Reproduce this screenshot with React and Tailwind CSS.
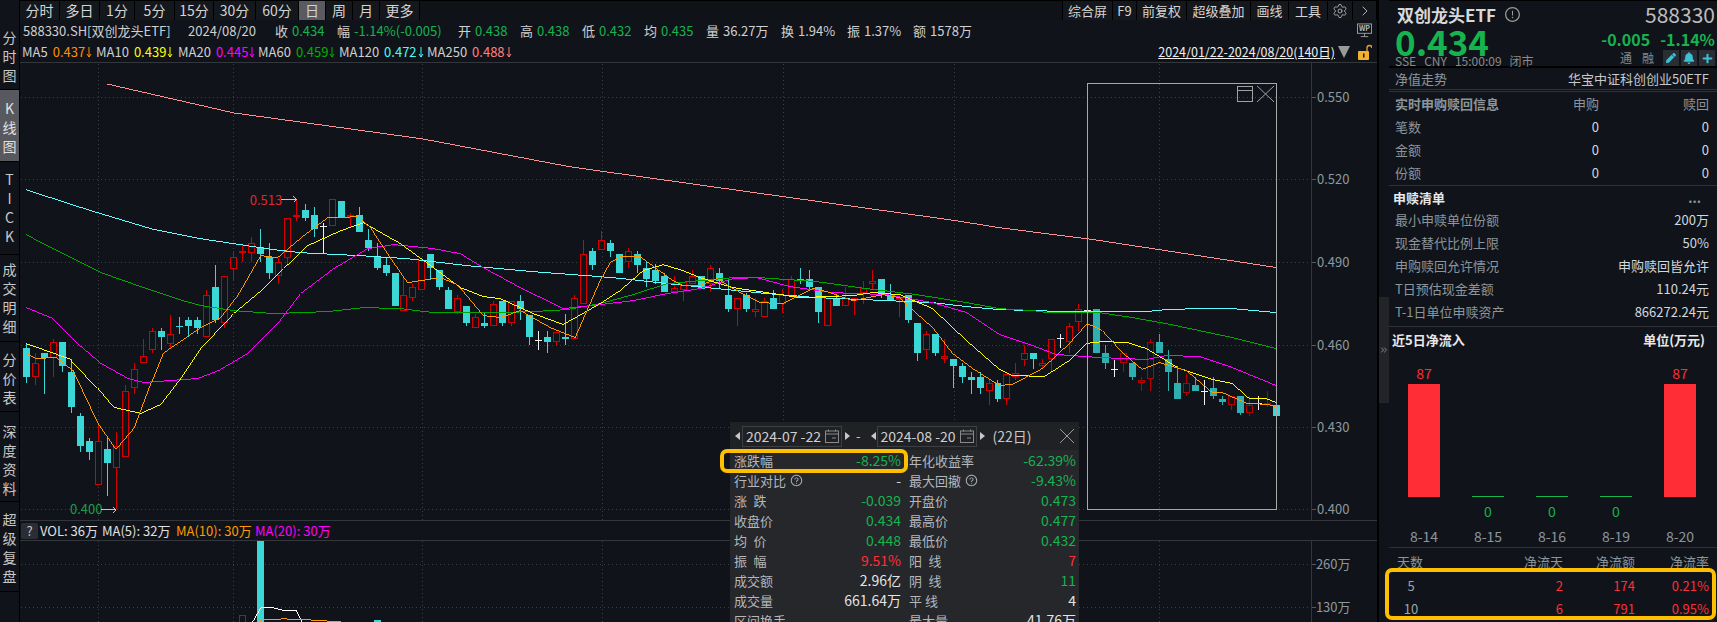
import React from 'react';
import { ChevronRight, ChevronsRight, Settings } from 'lucide-react';
import { FaPen, FaBell, FaPlus } from 'react-icons/fa';
import { AiOutlineExclamationCircle, AiOutlineQuestionCircle } from 'react-icons/ai';

// [type, bodyTop, bodyBottom, wickTop, wickBottom], one per trading day
const candles = [
  ['c',347,377,343,383],['r',363,377,352,385],['c',352,357,352,394],['r',341,357,338,377],['c',341,366,341,372],
  ['c',372,407,358,413],['c',416,446,413,452],['c',441,452,438,460],['r',441,485,423,485],['c',449,463,438,496],
  ['r',446,468,432,509],['r',391,457,385,457],['r',369,388,363,394],['r',355,363,338,363],['r',330,349,327,352],
  ['c',330,336,327,349],['r',333,343,314,347],['c',325,326,316,333],['c',319,325,316,336],['c',319,327,316,333],
  ['r',294,336,289,336],['c',286,319,264,322],['r',275,322,275,327],['r',256,268,250,280],['r',250,252,243,261],
  ['r',242,252,236,261],['c',246,253,228,261],['c',256,272,242,278],['r',261,275,257,283],['r',217,257,217,265],
  ['r',214,216,199,220],['c',209,217,203,220],['c',214,228,206,236],['w',225,225,222,253],['r',198,225,198,225],
  ['c',200,217,200,217],['r',214,216,212,227],['c',214,231,206,231],['c',239,247,228,250],['c',255,267,242,269],
  ['c',264,272,256,275],['c',272,305,272,305],['r',294,310,277,310],['r',286,297,283,300],['r',259,289,258,289],
  ['c',253,267,253,278],['c',269,286,269,289],['c',289,308,286,308],['r',297,311,294,313],['c',305,322,305,325],
  ['r',316,327,313,327],['c',322,325,311,327],['r',303,325,300,325],['c',300,322,300,325],['r',300,322,300,325],
  ['c',300,308,294,319],['c',314,336,314,344],['w',339,339,330,349],['c',336,341,330,352],['r',331,341,331,344],
  ['c',336,338,313,344],['r',297,338,294,338],['r',253,303,239,303],['c',250,264,247,269],['r',239,249,230,249],
  ['c',242,250,239,256],['c',253,272,253,272],['r',250,261,247,267],['c',253,264,250,272],['c',267,278,261,286],
  ['c',269,280,263,283],['c',275,291,272,291],['r',287,291,275,291],['r',281,289,281,300],['r',275,283,269,283],
  ['c',275,288,275,288],['r',267,283,264,291],['c',272,280,267,288],['c',294,308,278,311],['r',297,308,297,325],
  ['c',294,308,292,311],['r',308,311,297,316],['r',300,316,297,316],['c',297,308,289,308],['r',294,303,288,312],
  ['r',278,295,275,295],['c',278,280,267,283],['c',278,286,269,288],['c',286,311,286,322],['r',297,325,297,325],
  ['c',297,305,294,305],['r',297,305,286,305],['r',297,300,297,314],['r',287,292,280,303],['r',280,283,269,288],
  ['c',278,294,278,297],['c',294,300,283,300],['r',297,299,297,316],['c',294,319,294,322],['c',322,352,322,360],
  ['r',333,349,330,358],['c',333,352,333,355],['r',355,358,338,363],['c',358,366,358,388],['c',366,377,363,383],
  ['c',377,380,372,394],['c',377,388,372,394],['r',383,391,380,405],['c',383,399,380,402],['r',374,399,374,405],
  ['r',373,377,363,380],['r',352,359,344,366],['c',352,358,352,369],['r',363,366,358,369],['r',338,358,338,371],
  ['w',337,337,333,347],['r',325,341,322,352],['r',308,321,303,330],['w',309,309,306,312],['c',308,352,308,352],
  ['c',352,363,344,369],['w',369,369,359,377],['r',352,363,352,372],['c',363,377,363,380],['r',380,383,377,391],
  ['r',341,379,338,391],['c',341,352,333,352],['c',358,372,349,391],['c',383,399,366,399],['r',383,393,374,396],
  ['c',385,391,377,391],['w',391,391,380,405],['c',388,396,377,399],['c',399,402,396,405],['r',396,405,396,410],
  ['c',396,413,396,415],['r',405,413,396,416],['w',403,403,396,410],['r',403,405,391,407],['c',405,416,405,416],
];

const ma250 = '106,83 233,112 422,138 570,166 770,194 957,220 1000,227 1095,239 1278,267';
const ma120 = '25,189 87,209 150,228 200,238 233,243 273,249 300,252 360,255 407,258 467,265 533,271 600,276 623,278 667,283 717,288 767,293 817,297 887,300 933,302 967,306 1000,309 1067,311 1100,311 1147,311 1167,309 1200,308 1233,308 1277,312';
const ma60 = '25,234 60,252 100,272 140,286 182,300 200,305 233,310 273,313 327,311 363,307 400,308 433,312 500,312 533,311 567,309 600,303 633,294 667,283 700,280 733,277 760,277 817,281 867,288 917,294 967,302 1000,308 1033,310 1048,312 1100,312 1133,317 1167,323 1200,330 1233,337 1277,348';
const ma20 = '25,307 52,318 73,340 100,363 127,378 143,382 197,378 218,370 247,353 277,323 300,293 333,268 367,248 393,244 433,248 460,253 483,267 520,287 563,308 600,304 633,300 667,293 700,288 733,278 757,277 790,286 833,292 887,294 933,302 967,312 1000,334 1033,345 1057,354 1100,357 1147,359 1167,355 1200,356 1233,367 1277,385';
const ma10 = '25,343 70,359 97,388 113,407 140,413 160,404 180,378 200,348 233,313 263,288 283,268 307,245 340,230 363,222 400,243 433,267 460,287 483,296 500,298 533,313 563,324 600,303 620,290 643,270 663,264 683,270 700,277 733,287 767,292 800,297 853,295 873,292 900,294 933,308 953,327 967,340 1000,369 1013,375 1045,376 1070,360 1087,343 1103,341 1128,342 1147,348 1180,368 1213,379 1233,383 1250,398 1267,398 1277,402';
const ma5 = '25,353 35,358 55,357 72,370 97,423 115,449 133,428 150,383 162,353 200,327 220,317 237,295 260,255 277,257 303,235 327,217 357,216 370,227 387,253 407,282 440,277 457,284 483,315 500,317 520,310 550,327 575,337 600,280 610,262 620,256 640,256 673,280 683,285 700,285 717,278 733,288 760,302 783,303 813,288 827,291 853,300 883,294 900,297 917,313 933,327 953,353 973,368 1000,385 1013,384 1043,368 1070,343 1088,323 1103,330 1123,352 1143,369 1160,362 1187,370 1213,392 1223,392 1248,403 1270,404 1277,407';

const maRow = [
  { name: 'MA5', value: '0.437', color: 'text-[#ff9000]', w: 'w-[74px]' },
  { name: 'MA10', value: '0.439', color: 'text-[#ffff00]', w: 'w-[82px]' },
  { name: 'MA20', value: '0.445', color: 'text-[#ff00ff]', w: 'w-[80px]' },
  { name: 'MA60', value: '0.459', color: 'text-[#00b000]', w: 'w-[81px]' },
  { name: 'MA120', value: '0.472', color: 'text-[#40ffff]', w: 'w-[88px]' },
  { name: 'MA250', value: '0.488', color: 'text-[#ff8080]', w: 'w-[88px]' },
];

const GridX = [97, 232, 422, 602, 783, 954, 1160];

const Candle = ({ c, i }) => {
  const [t, bt, bb, wt, wb] = c;
  const x = 25 + i * 9.007;
  const cx = Math.round(x) + 0.5;
  const dim = i >= 118 && i < 139;
  const cyan = dim ? '#2fb0b0' : '#3bd6d6';
  const red = dim ? '#b80000' : '#d60000';
  if (t === 'w') {
    return (
      <g stroke="#f0f0f0">
        <line x1={cx} x2={cx} y1={wt} y2={wb} />
        <line x1={cx - 3.5} x2={cx + 3.5} y1={bt + 0.5} y2={bt + 0.5} />
      </g>
    );
  }
  if (t === 'c') {
    return (
      <g>
        <line x1={cx} x2={cx} y1={wt} y2={wb} stroke={cyan} />
        <rect x={cx - 3.5} y={bt} width={7} height={Math.max(bb - bt, 1)} fill={cyan} />
      </g>
    );
  }
  return (
    <g stroke={red} fill="none">
      <line x1={cx} x2={cx} y1={wt} y2={bt} />
      <line x1={cx} x2={cx} y1={bb} y2={wb} />
      <rect x={cx - 3} y={bt + 0.5} width={6} height={Math.max(bb - bt - 1, 1)} fill="#10141a" />
    </g>
  );
};

const Arrow = ({ x1, x2, y }) => (
  <g stroke="#c8c8c8" fill="none">
    <line x1={x1} x2={x2} y1={y} y2={y} />
    <polyline points={`${x2 - 3},${y - 3} ${x2},${y} ${x2 - 3},${y + 3}`} />
  </g>
);

const MainChart = () => (
  <svg viewBox="20 62 1357 458" className="block w-[1357px] h-[458px]" shapeRendering="crispEdges">
    {[96.5, 178.5, 261.5, 344.5, 427.5, 509.5].map((y, i) => (
      <g key={y}>
        <line x1={20} x2={1312} y1={y} y2={y} stroke="#3c4046" strokeDasharray="1 3" />
        <line x1={1312} x2={1317} y1={y} y2={y} stroke="#55595e" />
        <text x={1318} y={y + 4.5} fontSize="13" fill="#8f989e" shapeRendering="auto">
          {['0.550', '0.520', '0.490', '0.460', '0.430', '0.400'][i]}
        </text>
      </g>
    ))}
    {GridX.map((x) => (
      <line key={x} x1={x + 0.5} x2={x + 0.5} y1={63} y2={520} stroke="#3c4046" strokeDasharray="1 3" />
    ))}
    <line x1={1312.5} x2={1312.5} y1={62} y2={520} stroke="#33363b" />

    {candles.map((c, i) => <Candle key={i} c={c} i={i} />)}

    <polyline points={ma250} fill="none" stroke="#ff8f8f" />
    <polyline points={ma120} fill="none" stroke="#60ffff" />
    <polyline points={ma60} fill="none" stroke="#00a800" />
    <polyline points={ma20} fill="none" stroke="#ff00ff" />
    <polyline points={ma10} fill="none" stroke="#ffff00" />
    <polyline points={ma5} fill="none" stroke="#ff9a00" />

    {/* range selection */}
    <rect x={1088.5} y={82.5} width={189} height={427} fill="none" stroke="#a8a8a8" />
    <rect x={1238.5} y={85.5} width={15} height={15} fill="none" stroke="#a0a0a0" />
    <line x1={1238} x2={1254} y1={89.5} y2={89.5} stroke="#a0a0a0" />
    <g stroke="#a0a0a0" shapeRendering="auto">
      <line x1={1258} x2={1275} y1={85} y2={101} />
      <line x1={1275} x2={1258} y1={85} y2={101} />
    </g>

    <text x={249} y={204} fontSize="13" fill="#e0252c" shapeRendering="auto">0.513</text>
    <Arrow x1={280} x2={296} y={198.5} />
    <text x={69} y={514} fontSize="13" fill="#1f9d4a" shapeRendering="auto">0.400</text>
    <Arrow x1={100} x2={115} y={509.5} />
  </svg>
);

const VolumeChart = () => (
  <svg viewBox="20 541 1357 81" className="block w-[1357px] h-[81px]" shapeRendering="crispEdges">
    {[564.5, 607.5].map((y, i) => (
      <g key={y}>
        <line x1={20} x2={1312} y1={y} y2={y} stroke="#3c4046" strokeDasharray="1 3" />
        <line x1={1312} x2={1317} y1={y} y2={y} stroke="#55595e" />
        <text x={1317} y={y + 4.5} fontSize="13" fill="#8f989e" shapeRendering="auto">{['260万', '130万'][i]}</text>
      </g>
    ))}
    {GridX.map((x) => (
      <line key={x} x1={x + 0.5} x2={x + 0.5} y1={541} y2={622} stroke="#3c4046" strokeDasharray="1 3" />
    ))}
    <line x1={1312.5} x2={1312.5} y1={541} y2={622} stroke="#33363b" />
    <rect x={256} y={541} width={7} height={81} fill="#3bd6d6" />
    <rect x={238.5} y={615.5} width={6} height={10} fill="none" stroke="#d60000" />
    <rect x={373} y={620} width={7} height={2} fill="#3bd6d6" />
    <polyline points="252,622 260,608 273,608 284,611 296,611 301,622" fill="none" stroke="#ffffff" />
    <polyline points="257,622 261,620 283,619 308,620 340,622" fill="none" stroke="#ff9a00" />
  </svg>
);

const Tab = ({ children, className = '', active }) => (
  <div className={`h-full flex items-center justify-center border-r border-black text-[14px] text-[#d4d4d4] ${active ? 'bg-[#5a5a62]' : 'bg-[#14171c]'} ${className}`}>
    {children}
  </div>
);

const TopBar = () => (
  <div className="h-5 flex items-center bg-[#0f1216] border-t border-black">
    <Tab className="w-[40px]">分时</Tab>
    <Tab className="w-[40px]">多日</Tab>
    <Tab className="w-[35px]">1分</Tab>
    <Tab className="w-[40px]">5分</Tab>
    <Tab className="w-[39px]">15分</Tab>
    <Tab className="w-[42px]">30分</Tab>
    <Tab className="w-[43px]">60分</Tab>
    <Tab className="w-[27px]" active>日</Tab>
    <Tab className="w-[27px]">周</Tab>
    <Tab className="w-[27px]">月</Tab>
    <Tab className="w-[40px]">更多</Tab>
    <div className="ml-auto h-full flex items-center border-l border-black">
      <Tab className="w-[50px] !text-[13px]">综合屏</Tab>
      <Tab className="w-[24px] !text-[13px]">F9</Tab>
      <Tab className="w-[50px] !text-[13px]">前复权</Tab>
      <Tab className="w-[64px] !text-[13px]">超级叠加</Tab>
      <Tab className="w-[38px] !text-[13px]">画线</Tab>
      <Tab className="w-[39px] !text-[13px]">工具</Tab>
      <Tab className="w-[25px]"><Settings size={16} strokeWidth={1.3} className="text-[#b8b8b8]" /></Tab>
      <Tab className="w-[24px]"><ChevronRight size={16} strokeWidth={1.3} className="text-[#c8c8c8]" /></Tab>
    </div>
  </div>
);

const Stat = ({ label, value, green, className }) => (
  <span className={`flex gap-[4px] ${className}`}>
    <span className="text-[#d0d0d0]">{label}</span>
    <span className={green ? 'text-[#16b34f]' : 'text-[#d0d0d0]'}>{value}</span>
  </span>
);

const InfoRow = () => (
  <div className="h-[22px] pl-[3px] pr-[5px] flex items-center text-[13px] leading-none whitespace-nowrap">
    <span className="text-[#d0d0d0] w-[165px]">588330.SH[双创龙头ETF]</span>
    <span className="text-[#d0d0d0] w-[87px]">2024/08/20</span>
    <Stat className="w-[62px]" label="收" value="0.434" green />
    <Stat className="w-[121px]" label="幅" value="-1.14%(-0.005)" green />
    <Stat className="w-[62px]" label="开" value="0.438" green />
    <Stat className="w-[62px]" label="高" value="0.438" green />
    <Stat className="w-[62px]" label="低" value="0.432" green />
    <Stat className="w-[62px]" label="均" value="0.435" green />
    <Stat className="w-[75px]" label="量" value="36.27万" />
    <Stat className="w-[66px]" label="换" value="1.94%" />
    <Stat className="w-[66px]" label="振" value="1.37%" />
    <Stat className="w-[70px]" label="额" value="1578万" />
    <svg viewBox="0 0 16 16" className="ml-auto w-[15px] h-[15px]">
      <rect x="0.5" y="1" width="15" height="10" fill="none" stroke="#a0a0a0" />
      <text x="8" y="9" fontSize="7.5" fontWeight="700" textAnchor="middle" fill="#b8b8b8">WP</text>
      <path d="M8 11v3M4 14.5h8" stroke="#a0a0a0" fill="none" />
    </svg>
  </div>
);

const DownTick = () => (
  <svg viewBox="0 0 6 12" className="w-[6px] h-[12px] ml-[1px]" fill="none" stroke="currentColor" strokeWidth="1">
    <path d="M3 1v10M1 8l2 3 2-3" />
  </svg>
);

const MaRow = () => (
  <div className="h-[20px] pl-[2px] pr-[5px] flex items-center text-[13px] leading-none whitespace-nowrap">
    {maRow.map((m) => (
      <span key={m.name} className={`flex items-center gap-[5px] ${m.w}`}>
        <span className="text-[#d0d0d0]">{m.name}</span>
        <span className={`flex items-center ${m.color}`}>{m.value}<DownTick /></span>
      </span>
    ))}
    <span className="ml-auto text-[12.5px] text-[#f0f0f0] underline">2024/01/22-2024/08/20(140日)</span>
    <span className="ml-[3px] w-0 h-0 border-x-[6px] border-x-transparent border-t-[12px] border-t-[#9a9a9a]" />
    <svg viewBox="0 0 14 16" className="ml-[8px] w-[14px] h-[16px]">
      <path d="M9 7V4a2.5 2.5 0 0 1 5 0" fill="none" stroke="#f0a020" strokeWidth="1.3" />
      <rect x="0" y="7" width="11" height="9" rx="1" fill="#f0b030" />
      <rect x="5" y="9.5" width="1.5" height="4" fill="#1a1a1a" />
    </svg>
  </div>
);

const VolHeader = () => (
  <div className="h-[21px] flex items-center pl-[1px] border-y border-[#33363b] text-[13px] leading-none whitespace-nowrap">
    <span className="w-[17px] h-[16px] mr-[2px] bg-[#2a2d33] rounded-[2px] flex items-center justify-center text-[#c8c8c8]">?</span>
    <span className="w-[62px] text-[#e0e0e0]">VOL: 36万</span>
    <span className="w-[74px] text-[#e0e0e0]">MA(5): 32万</span>
    <span className="w-[79px] text-[#ff9a00]">MA(10): 30万</span>
    <span className="text-[#ff00ff]">MA(20): 30万</span>
  </div>
);

const Tri = ({ left, className = '' }) => (
  <span className={`w-0 h-0 border-y-[4px] border-y-transparent ${left ? 'border-r-[5px] border-r-[#c8c8c8]' : 'border-l-[5px] border-l-[#c8c8c8]'} ${className}`} />
);

const DateBox = ({ children, className = '' }) => (
  <div className={`w-[100px] h-[21px] border border-[#3c3f44] pl-[3px] pr-[2px] flex items-center justify-between text-[14px] text-[#d0d0d0] leading-none ${className}`}>
    {children}
    <svg viewBox="0 0 14 14" className="w-[14px] h-[14px]" fill="none" stroke="#8a8a8a">
      <rect x="0.5" y="2" width="13" height="11.5" />
      <path d="M0.5 5h13M3.5 0.5v2M10.5 0.5v2M7 9h4" />
    </svg>
  </div>
);

const PopupRow = ({ l, v, vc = 'text-[#16b34f]', l2, v2, vc2 = 'text-[#16b34f]', q, q2 }) => (
  <div className="h-5 grid grid-cols-[167px_1fr] gap-[8px] items-center text-[13px] leading-none whitespace-nowrap">
    <div className="flex justify-between items-center">
      <span className="flex items-center gap-[4px] text-[#b4b8bc]">{l}{q && <AiOutlineQuestionCircle size={13} />}</span>
      <span className={`text-[14px] ${vc}`}>{v}</span>
    </div>
    <div className="flex justify-between items-center">
      <span className="flex items-center gap-[4px] text-[#b4b8bc]">{l2}{q2 && <AiOutlineQuestionCircle size={13} />}</span>
      <span className={`text-[14px] ${vc2}`}>{v2}</span>
    </div>
  </div>
);

const RangePopup = () => (
  <div className="absolute left-[710px] top-[422px] w-[349px] h-[200px] overflow-hidden bg-[#25272b]">
    <div className="h-[28px] pl-[5px] flex items-center bg-[#1f2125]">
      <Tri left />
      <DateBox className="ml-[2px]">2024-07 -22</DateBox>
      <Tri className="ml-[3px]" />
      <span className="ml-[6px] text-[13px] text-[#c8c8c8]">-</span>
      <Tri left className="ml-[10px]" />
      <DateBox className="ml-[1px]">2024-08 -20</DateBox>
      <Tri className="ml-[3px]" />
      <span className="ml-[8px] text-[14px] text-[#c8c8c8] leading-none">(22日)</span>
      <svg viewBox="0 0 14 14" className="ml-auto mr-[5px] w-[14px] h-[14px]" stroke="#9a9a9a"><path d="M0 0L14 14M14 0L0 14" /></svg>
    </div>
    <div className="pl-[4px] pr-[3px]">
      <PopupRow l="涨跌幅" v="-8.25%" l2="年化收益率" v2="-62.39%" />
      <PopupRow l="行业对比" q v="-" vc="text-[#d8d8d8]" l2="最大回撤" q2 v2="-9.43%" />
      <PopupRow l="涨&ensp;跌" v="-0.039" l2="开盘价" v2="0.473" />
      <PopupRow l="收盘价" v="0.434" l2="最高价" v2="0.477" />
      <PopupRow l="均&ensp;价" v="0.448" l2="最低价" v2="0.432" />
      <PopupRow l="振&ensp;幅" v="9.51%" vc="text-[#ff2d36]" l2="阳&ensp;线" v2="7" vc2="text-[#ff2d36]" />
      <PopupRow l="成交额" v="2.96亿" vc="text-[#e4e4e4]" l2="阴&ensp;线" v2="11" />
      <PopupRow l="成交量" v="661.64万" vc="text-[#e4e4e4]" l2="平 线" v2="4" vc2="text-[#e4e4e4]" />
      <PopupRow l="区间换手" v="" l2="最大量" v2="41.76万" vc2="text-[#e4e4e4]" />
    </div>
  </div>
);

const Rail = () => (
  <div className="w-5 shrink-0 flex flex-col border-r border-black text-[14px] leading-[19px] text-[#c8c8c8] text-center">
    <div className="h-[90px] pt-[28px] border-b border-black">分<br />时<br />图</div>
    <div className="h-[72px] pt-[9px] bg-[#58585f] text-[#e0e0e0] border-b border-black">K<br />线<br />图</div>
    <div className="h-[93px] pt-[8px] border-b border-black">T<br />I<br />C<br />K</div>
    <div className="h-[87px] pt-[5px] border-b border-black">成<br />交<br />明<br />细</div>
    <div className="h-[70px] pt-[8px] border-b border-black">分<br />价<br />表</div>
    <div className="h-[90px] pt-[10px] border-b border-black">深<br />度<br />资<br />料</div>
    <div className="h-[90px] pt-[8px] border-b border-black">超<br />级<br />复<br />盘</div>
  </div>
);

const Row = ({ label, children, className = 'h-[23px]' }) => (
  <div className={`flex items-center justify-between pl-[6px] pr-[8px] text-[13px] leading-none ${className}`}>
    <span className="text-[#8c959b]">{label}</span>
    {children}
  </div>
);

const Val = ({ children }) => <span className="text-[#d0d8de]">{children}</span>;

const Row3 = ({ label, a, b, bold, gray }) => (
  <div className="h-[23px] grid grid-cols-[1fr_60px_110px] items-center pl-[6px] pr-[8px] text-[13px] leading-none">
    <span className={`text-[#8c959b] ${bold ? 'font-bold' : ''}`}>{label}</span>
    <span className={`text-right ${gray ? 'text-[#8c959b]' : 'text-[#d0d8de]'}`}>{a}</span>
    <span className={`text-right ${gray ? 'text-[#8c959b]' : 'text-[#d0d8de]'}`}>{b}</span>
  </div>
);

const IconBtn = ({ children }) => (
  <span className="w-[16px] h-[16px] bg-[#2a2e34] flex items-center justify-center text-[#3cc0d4]">{children}</span>
);

const Quote = () => (
  <div className="h-[68px] flex justify-between border-t border-black border-b-2 border-b-black">
    <div className="pl-[6px]">
      <div className="h-[26px] pl-[2px] flex items-center gap-[8px] text-[17px] font-bold text-[#d8d8d8] leading-none">
        双创龙头ETF <AiOutlineExclamationCircle size={17} className="text-[#9a9a9a]" />
      </div>
      <div className="h-[26px] flex items-center text-[35px] font-bold text-[#16b34f] leading-none">0.434</div>
      <div className="h-[15px] flex items-center gap-[8px] text-[12px] text-[#8a8a8a] leading-none whitespace-nowrap">
        <span>SSE</span><span>CNY</span><span>15:00:09</span><span>闭市</span>
      </div>
    </div>
    <div className="flex flex-col items-end pr-[2px]">
      <div className="h-[27px] flex items-center text-[21px] text-[#bcbcbc] leading-none">588330</div>
      <div className="h-[23px] flex items-center gap-[10px] text-[16px] font-bold text-[#16b34f] leading-none">
        <span>-0.005</span><span>-1.14%</span>
      </div>
      <div className="h-[16px] flex items-center gap-[2px] text-[12px] text-[#8a8a8a] leading-none">
        <span className="mr-[8px]">通</span>
        <span className="mr-[7px]">融</span>
        <IconBtn><FaPen size={10} /></IconBtn>
        <IconBtn><FaBell size={12} /></IconBtn>
        <IconBtn><FaPlus size={11} /></IconBtn>
      </div>
    </div>
  </div>
);

const flows = [
  { d: '8-14', v: 87 },
  { d: '8-15', v: 0 },
  { d: '8-16', v: 0 },
  { d: '8-19', v: 0 },
  { d: '8-20', v: 87 },
];

const FlowChart = () => (
  <div className="h-[196px] pl-[3px] pr-[5px] grid grid-cols-5">
    {flows.map((f) => (
      <div key={f.d} className="flex flex-col items-center justify-end text-[13px] leading-none">
        <div className="flex flex-col items-center h-[140px] justify-end">
          {f.v > 0 ? (
            <>
              <span className="text-[#ff2d36] text-[14px] mb-[4px]">{f.v}</span>
              <div className="w-8 h-[113px] bg-[#ff2d36]" />
            </>
          ) : (
            <div className="w-8 h-px bg-[#16b34f]" />
          )}
        </div>
        <div className="h-[25px] pt-[7px] text-[14px] text-[#16b34f]">{f.v > 0 ? '' : '0'}</div>
        <div className="h-[25px] pt-[7px] text-[14px] text-[#8c959b]">{f.d}</div>
      </div>
    ))}
  </div>
);

const SumRow = ({ a, b, c, d, header }) => (
  <div className={`grid grid-cols-[60px_1fr_72px_74px] items-center pl-[8px] pr-[8px] text-[13px] leading-none ${header ? 'h-[26px] text-[#8c959b]' : 'h-[23px] text-[#ff2d36]'}`}>
    <span className={header ? '' : 'text-[#9aa6ac] text-center pr-[32px]'}>{a}</span>
    <span className="text-right">{b}</span>
    <span className="text-right">{c}</span>
    <span className="text-right">{d}</span>
  </div>
);

const RightPanel = () => (
  <div className="w-[328px] shrink-0 relative whitespace-nowrap">
    <Quote />
    <Row label="净值走势" className="h-[21px]"><span className="text-[#c8c8c8]">华宝中证科创创业50ETF</span></Row>
    <div className="border-y border-[#2e3136] h-[3px]" />
    <div className="border-b border-[#2e3136] pb-[1px]">
      <Row3 label="实时申购赎回信息" a="申购" b="赎回" bold gray />
      <Row3 label="笔数" a="0" b="0" />
      <Row3 label="金额" a="0" b="0" />
      <Row3 label="份额" a="0" b="0" />
    </div>
    <div className="h-[22px] flex items-center justify-between pl-[4px] pr-[16px] text-[13px] font-bold text-[#e8e8e8] leading-none">
      申赎清单<span className="text-[#8c959b]">...</span>
    </div>
    <div className="border-b border-[#2e3136] pb-[3px]">
      <Row label="最小申赎单位份额"><Val>200万</Val></Row>
      <Row label="现金替代比例上限"><Val>50%</Val></Row>
      <Row label="申购赎回允许情况"><Val>申购赎回皆允许</Val></Row>
      <Row label="T日预估现金差额"><Val>110.24元</Val></Row>
      <Row label="T-1日单位申赎资产"><Val>866272.24元</Val></Row>
    </div>
    <div className="h-[24px] flex items-center justify-between pl-[3px] pr-[12px] text-[13px] font-bold text-[#e8e8e8] leading-none">
      <span>近5日净流入</span><span>单位(万元)</span>
    </div>
    <div className="border-b border-[#2e3136]"><FlowChart /></div>
    <SumRow header a="天数" b="净流天" c="净流额" d="净流率" />
    <SumRow a="5" b="2" c="174" d="0.21%" />
    <SumRow a="10" b="6" c="791" d="0.95%" />
    {/* highlight frame */}
    <div className="absolute left-[-4px] top-[568px] w-[331px] h-[52px] border-4 border-[#fdbf00] rounded-[7px]" />
  </div>
);

export default function App() {
  return (
    <div className="w-[1717px] h-[622px] flex overflow-hidden bg-[#10141a] [font-family:'Noto_Sans_CJK_SC',sans-serif]">
      <Rail />
      <div className="w-[1357px] shrink-0 relative flex flex-col">
        <TopBar />
        <InfoRow />
        <MaRow />
        <div className="h-px bg-[#33363b]" />
        <MainChart />
        <VolHeader />
        <VolumeChart />
        <RangePopup />
        {/* highlight frame round the first row of the popup */}
        <div className="absolute left-[700px] top-[449px] w-[188px] h-[24px] border-4 border-[#fdbf00] rounded-[7px]" />
      </div>
      <div className="w-[12px] shrink-0 relative border-l-2 border-black">
        <div className="absolute left-0 top-[297px] w-[10px] h-[106px] bg-[#222428] flex items-center justify-center">
          <ChevronsRight size={10} className="text-[#9a9a9a]" />
        </div>
      </div>
      <RightPanel />
    </div>
  );
}
